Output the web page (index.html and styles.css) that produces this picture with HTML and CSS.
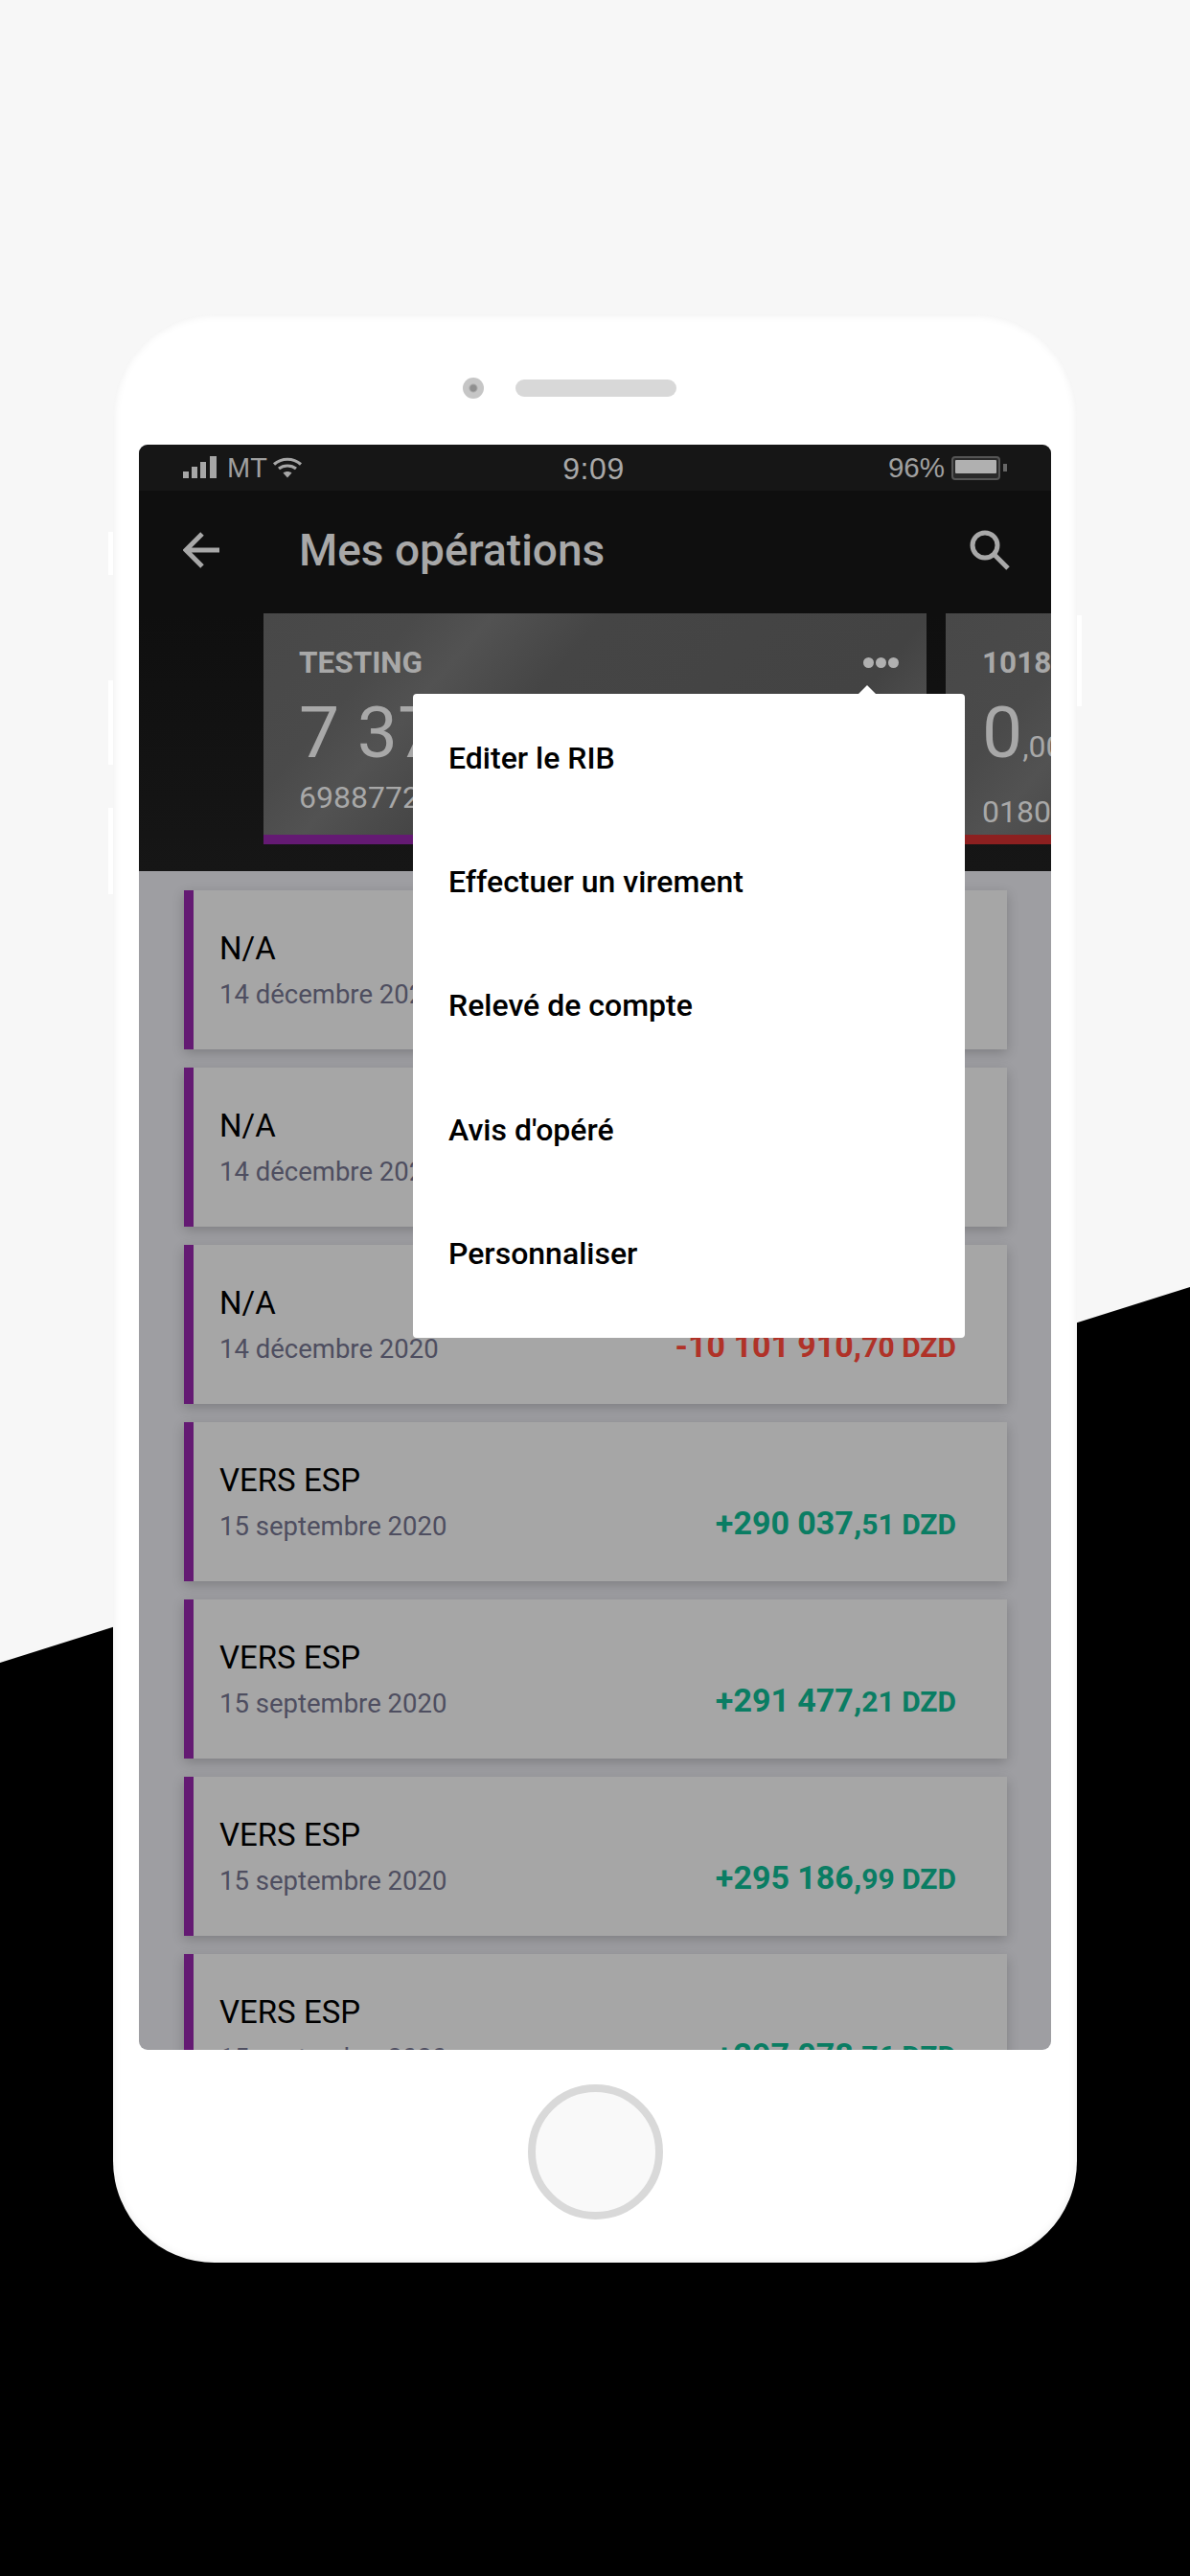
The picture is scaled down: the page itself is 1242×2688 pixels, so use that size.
FILE: index.html
```html
<!DOCTYPE html>
<html lang="fr">
<head>
<meta charset="utf-8">
<title>Mes opérations</title>
<link rel="stylesheet" href="styles.css">
</head>
<body>
<div class="stage">
  <span class="side side-l1"></span>
  <span class="side side-l2"></span>
  <span class="side side-l3"></span>
  <span class="side side-r1"></span>
  <div class="phone">
    <div class="earpiece">
      <span class="camera"></span>
      <span class="speaker"></span>
    </div>
    <div class="screen">
      <div class="status">
        <div class="status-left">
          <svg class="signal" width="36" height="24" viewBox="0 0 36 24"><g fill="#a6a6a6"><rect x="0" y="16" width="6" height="7"/><rect x="9" y="11" width="6" height="12"/><rect x="18" y="6" width="6" height="17"/><rect x="28" y="0" width="7" height="23"/></g></svg>
          <span class="carrier">MT</span>
          <svg class="wifi" width="32" height="24" viewBox="0 0 32 24"><g fill="none" stroke="#a6a6a6" stroke-width="3.2"><path d="M2 8.5C10 1.5 22 1.500 30 8.500"/><path d="M7 13C12 9 20 9 25 13"/></g><path d="M11.500 17.500C14 15.500 18 15.500 20.500 17.500L16 22.500Z" fill="#a6a6a6"/></svg>
        </div>
        <span class="clock">9:09</span>
        <div class="status-right">
          <span class="pct">96%</span>
          <span class="battery"><span class="battery-fill"></span></span>
          <span class="battery-nub"></span>
        </div>
      </div>
      <div class="appbar">
        <svg class="back" width="40" height="40" viewBox="0 0 40 40"><path d="M38 20H4M20 3L3 20L20 37" fill="none" stroke="#a8a8a8" stroke-width="5"/></svg>
        <h1 class="title">Mes opérations</h1>
        <svg class="search" width="42" height="42" viewBox="0 0 42 42"><circle cx="16" cy="16" r="13" fill="none" stroke="#a8a8a8" stroke-width="5"/><path d="M26 26L40 40" fill="none" stroke="#a8a8a8" stroke-width="5"/></svg>
      </div>
      <div class="cards">
        <div class="card card-purple">
          <div class="card-head"><span class="card-name">TESTING</span><span class="dots"><i></i><i></i><i></i></span></div>
          <div class="card-amount">7 37</div>
          <div class="card-num">6988772</div>
        </div>
        <div class="card card-red">
          <div class="card-head"><span class="card-name">1018</span></div>
          <div class="card-amount">0<small>,00</small></div>
          <div class="card-num">01804</div>
        </div>
      </div>
      <div class="list">
        <div class="row"><div class="row-text"><div class="row-title">N/A</div><div class="row-date">14 décembre 2020</div></div></div>
        <div class="row"><div class="row-text"><div class="row-title">N/A</div><div class="row-date">14 décembre 2020</div></div></div>
        <div class="row"><div class="row-text"><div class="row-title">N/A</div><div class="row-date">14 décembre 2020</div></div><div class="amount neg">-10 101 910,<small>70 DZD</small></div></div>
        <div class="row"><div class="row-text"><div class="row-title">VERS ESP</div><div class="row-date">15 septembre 2020</div></div><div class="amount pos">+290 037,<small>51 DZD</small></div></div>
        <div class="row"><div class="row-text"><div class="row-title">VERS ESP</div><div class="row-date">15 septembre 2020</div></div><div class="amount pos">+291 477,<small>21 DZD</small></div></div>
        <div class="row"><div class="row-text"><div class="row-title">VERS ESP</div><div class="row-date">15 septembre 2020</div></div><div class="amount pos">+295 186,<small>99 DZD</small></div></div>
        <div class="row"><div class="row-text"><div class="row-title">VERS ESP</div><div class="row-date">15 septembre 2020</div></div><div class="amount pos">+297 078,<small>76 DZD</small></div></div>
      </div>
      <div class="menu">
        <div class="menu-item">Editer le RIB</div>
        <div class="menu-item">Effectuer un virement</div>
        <div class="menu-item">Relevé de compte</div>
        <div class="menu-item">Avis d'opéré</div>
        <div class="menu-item">Personnaliser</div>
      </div>
    </div>
    <div class="chin"><span class="home"></span></div>
  </div>
</div>
</body>
</html>
```
FILE: styles.css
```css
* { box-sizing: border-box; }
html, body { margin: 0; padding: 0; }
body { width: 1242px; height: 2688px; overflow: hidden; background: #f7f7f7; font-family: Roboto, "Liberation Sans", sans-serif; }
.stage { position: relative; width: 1242px; height: 2688px; padding: 328px 0 0 118px; }
.stage::before { content: ""; position: absolute; inset: 0; background: #000; clip-path: polygon(0 1735px, 1242px 1343px, 1242px 2688px, 0 2688px); }
.side { position: absolute; background: #fff; width: 5px; }
.side-l1 { left: 113px; top: 555px; height: 45px; }
.side-l2 { left: 113px; top: 710px; height: 88px; }
.side-l3 { left: 113px; top: 843px; height: 90px; }
.side-r1 { left: 1124px; top: 642px; height: 95px; }

.phone { position: relative; width: 1006px; height: 2033px; background: #fff; border-radius: 106px; box-shadow: inset 0 0 10px rgba(0,0,0,.08); padding: 0 27px; }
.earpiece { height: 136px; padding-left: 338px; padding-top: 66px; display: flex; align-items: flex-start; }
.camera { width: 22px; height: 22px; border-radius: 50%; background: radial-gradient(circle, #8f8f8f 0 3px, #c6c6c6 5px); }
.speaker { width: 168px; height: 18px; margin: 2px 0 0 33px; border-radius: 9px; background: #d8d8d8; }

.screen { position: relative; width: 952px; height: 1675px; overflow: hidden; border-radius: 9px; background: #9e9ea2; }
.status { height: 48px; background: #161616; display: grid; grid-template-columns: 1fr auto 1fr; align-items: start; padding: 12px 46px 0; color: #a0a0a0; font-family: "Liberation Sans", sans-serif; font-size: 29.500px; line-height: 24px; }
.status-left { display: flex; align-items: flex-start; }
.carrier { margin-left: 10px; font-size: 29px; }
.wifi { margin-left: 5px; }
.clock { letter-spacing: .6px; color: #a8a8a8; font-size: 32px; margin-top: 1px; margin-left: -3px; }
.status-right { display: flex; justify-content: flex-end; align-items: flex-start; position: relative; }
.pct { margin-right: 7px; }
.battery { width: 51px; height: 25px; border: 2px solid #555; border-radius: 4px; padding: 2px; background: #2a2a2a; display: flex; }
.battery-fill { flex: 1; height: 14px; background: #b0b0b0; border-radius: 1px; }
.battery-nub { width: 4px; height: 8px; margin: 8px 0 0 3px; background: #666; }

.appbar { height: 128px; background: #0f0f0f; display: flex; align-items: center; padding: 0 43px 0 46px; }
.back { margin-top: -4px; }
.title { margin: -4px 0 0 81px; flex: 1; font-size: 46px; line-height: 56px; font-weight: 500; color: #a8a8a8; }
.search { margin-top: -4px; }

.cards { height: 269px; background: linear-gradient(#0f0f0f, #161616); display: flex; gap: 20px; padding-left: 130px; overflow: hidden; }
.card { flex: 0 0 692px; height: 241px; padding: 28px 36px 0 37px; background: linear-gradient(131deg, #484848 0, #4a4a4a 18%, #525252 27%, #454545 40%, #434343 78%, #5a5a5a 97%); color: #a8a8a8; }
.card-purple { border-bottom: 10px solid #641a73; }
.card-red { border-bottom: 10px solid #8d2020; padding-left: 38px; }
.card-head { display: flex; justify-content: space-between; align-items: center; height: 46px; }
.card-name { font-size: 31.500px; font-weight: 700; }
.dots { display: flex; gap: 2px; margin-right: -7px; }
.dots i { width: 11px; height: 11px; border-radius: 50%; background: #b0b0b0; }
.card-amount { font-size: 75px; line-height: 88px; margin-top: 6px; white-space: nowrap; }
.card-amount small { font-size: 32px; }
.card-num { font-size: 32px; line-height: 40px; margin-top: 4px; white-space: nowrap; }

.list { padding: 20px 46px 0 47px; display: flex; flex-direction: column; gap: 19px; }
.row { flex: 0 0 166px; height: 166px; background: #a6a6a6; border-left: 10px solid #641a73; box-shadow: 0 4px 12px rgba(0,0,0,.2); padding: 0 53px 0 27px; display: flex; justify-content: space-between; position: relative; }
.row-text { padding-top: 39px; }
.row-title { font-size: 33px; line-height: 44px; color: #000; }
.row-date { font-size: 27.500px; line-height: 36px; margin-top: 8px; color: #4e4e60; }
.amount { font-size: 34px; font-weight: 700; line-height: 40px; margin-top: 85px; }
.amount small { font-size: 30px; font-weight: 700; }
.neg { color: #b03228; }
.pos { color: #0a7d63; }

.menu { position: absolute; left: 286px; top: 260px; width: 576px; height: 672px; background: #fff; border-radius: 4px; padding: 2px 0 0 37px; }
.menu::before { content: ""; position: absolute; left: 464px; top: -9px; width: 0; height: 0; border-left: 10px solid transparent; border-right: 10px solid transparent; border-bottom: 10px solid #fff; }
.menu-item { height: 129.400px; display: flex; align-items: center; font-size: 32px; font-weight: 500; color: #000; }

.chin { height: 222px; display: flex; justify-content: center; padding-top: 36px; }
.home { width: 141px; height: 141px; border-radius: 50%; border: 8px solid #d9d9d9; background: #f9f9f9; }
```
